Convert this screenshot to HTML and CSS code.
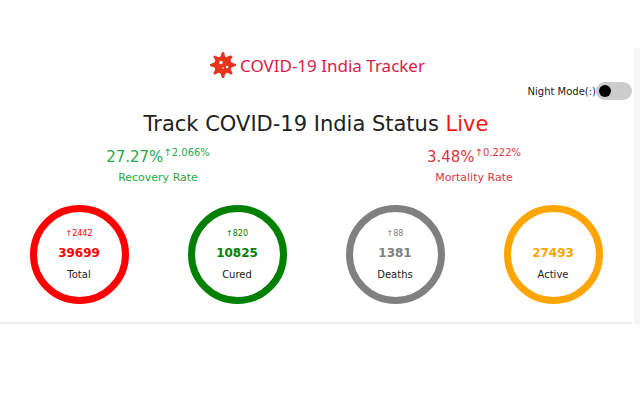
FILE: index.html
```html
<!DOCTYPE html>
<html lang="en">
<head>
	<title>COVID-19 India Tracker</title>
	<meta charset="utf-8">
	<meta name="viewport" content="width=device-width, initial-scale=1">
	<link rel="stylesheet" href="styles.css">
</head>
<body>
	<div class="page">
		<main class="tracker">
			<header class="brand">
				<svg class="logo" viewBox="0 0 28 28" aria-hidden="true">
					<g fill="#e8351a" stroke="#e8351a" stroke-linejoin="round">
						<path d="M14 1.500L16 7L21.500 5L21 11L26.500 14L21 17L22.500 22.500L17 21L14 26.500L11 21L5.500 22.500L7 17L1.500 14L7 11L5.500 5.500L11 7Z"/>
						<circle cx="14" cy="14" r="8"/>
					</g>
					<g stroke="#e8351a" stroke-width="3" stroke-linecap="round">
						<path d="M14 2.500V5M14 23V25.500M2.500 14H5M23 14H25.500M6 6L8 8M20 20L22 22M22 6L20 8M8 20L6 22"/>
					</g>
					<circle cx="12" cy="11.500" r="1.800" fill="#fff"/>
					<circle cx="18" cy="16" r="1.300" fill="#fff"/>
					<circle cx="14" cy="17" r="1" fill="#f9b9a8"/>
				</svg>
				<span>COVID-19 India Tracker</span>
			</header>
			<div class="night">
				<label for="night">Night Mode(:)</label>
				<input type="checkbox" id="night" class="switch">
			</div>
			<h1>Track COVID-19 India Status <span class="live">Live</span></h1>
			<div class="rates">
				<div class="rate recovery">
					<p class="percent">27.27%<sup>↑2.066%</sup></p>
					<p>Recovery Rate</p>
				</div>
				<div class="rate mortality">
					<p class="percent">3.48%<sup>↑0.222%</sup></p>
					<p>Mortality Rate</p>
				</div>
			</div>
			<div class="counts">
				<div class="circle total">
					<span class="change">↑2442</span>
					<strong>39699</strong>
					<span class="name">Total</span>
				</div>
				<div class="circle cured">
					<span class="change">↑820</span>
					<strong>10825</strong>
					<span class="name">Cured</span>
				</div>
				<div class="circle deaths">
					<span class="change">↑88</span>
					<strong>1381</strong>
					<span class="name">Deaths</span>
				</div>
				<div class="circle active">
					<span class="change"></span>
					<strong>27493</strong>
					<span class="name">Active</span>
				</div>
			</div>
		</main>
		<div class="edge"></div>
	</div>
</body>
</html>
```

FILE: styles.css
```css
* {
	box-sizing: border-box;
}

body {
	margin: 0;
	background-color: white;
	color: #212121;
	font-family: "DejaVu Sans", Verdana, sans-serif;
	font-size: 10px;
}

h1, p {
	margin: 0;
}

.page {
	display: flex;
	gap: 2px;
	margin-top: 48px;
}

.tracker {
	flex-grow: 1;
	padding-bottom: 18px;
	border-bottom: 2px solid #f1f1f1;
}

.edge {
	width: 6px;
	background-color: #f5f5f5;
}

.brand {
	display: flex;
	align-items: center;
	justify-content: center;
	gap: 3px;
	height: 34px;
	padding-left: 2px;
	color: #d81b45;
	font-family: "Noto Sans", sans-serif;
	font-size: 17px;
}

.logo {
	width: 28px;
	height: 28px;
}

.night {
	display: flex;
	align-items: center;
	justify-content: flex-end;
	height: 18px;
}

.switch {
	appearance: none;
	display: flex;
	width: 36px;
	height: 18px;
	margin: 0;
	padding: 3px;
	border-radius: 9px;
	background-color: #ccc;
}

	.switch::before {
		content: "";
		width: 12px;
		height: 12px;
		border-radius: 50%;
		background-color: black;
	}

	.switch:checked {
		justify-content: flex-end;
	}

h1 {
	margin-top: 10px;
	font-size: 21px;
	font-weight: normal;
	line-height: 28px;
	text-align: center;
}

.live {
	color: #f01818;
}

.rates {
	display: grid;
	grid-template-columns: 1fr 1fr;
	margin-top: 8px;
	text-align: center;
	font-size: 11px;
	line-height: 20px;
}

.recovery {
	color: #28a745;
}

.mortality {
	color: #dc3545;
}

.percent {
	font-size: 15px;
	line-height: 22px;
}

sup {
	font-size: 10px;
	line-height: 1;
}

.counts {
	display: grid;
	grid-template-columns: repeat(4, 1fr);
	justify-items: center;
	margin-top: 17px;
}

.circle {
	display: flex;
	flex-direction: column;
	align-items: center;
	width: 99px;
	height: 99px;
	padding-top: 14px;
	border: 7px solid;
	border-radius: 50%;
	line-height: 22px;
}

	.circle .change {
		height: 16px;
		font-size: 8px;
		line-height: 16px;
	}

	.circle strong {
		font-size: 12px;
	}

	.circle .name {
		color: #212121;
	}

.total {
	color: red;
}

.cured {
	color: green;
}

.deaths {
	color: gray;
}

.active {
	color: orange;
}
```
